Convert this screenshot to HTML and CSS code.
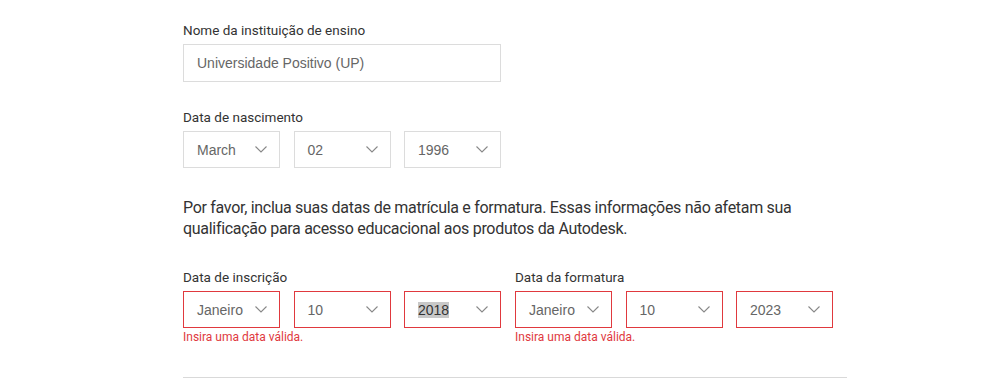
FILE: index.html
```html
<!DOCTYPE html>
<html lang="pt-BR">
<head>
    <meta charset="UTF-8">
    <meta name="viewport" content="width=device-width, initial-scale=1.0">
    <title>Informações educacionais</title>
    <link rel="stylesheet" href="styles.css">
</head>
<body>

    <div class="form">
        <div class="field">
            <label class="label">Nome da instituição de ensino</label>
            <div class="input">Universidade Positivo (UP)</div>
        </div>

        <div class="field">
            <label class="label">Data de nascimento</label>
            <div class="date-row">
                <div class="select"><span>March</span><svg class="chev" viewBox="0 0 12 7"><path d="M0.5 0.5 L6 6 L11.5 0.5"/></svg></div>
                <div class="select"><span>02</span><svg class="chev" viewBox="0 0 12 7"><path d="M0.5 0.5 L6 6 L11.5 0.5"/></svg></div>
                <div class="select"><span>1996</span><svg class="chev" viewBox="0 0 12 7"><path d="M0.5 0.5 L6 6 L11.5 0.5"/></svg></div>
            </div>
        </div>

        <p class="note">Por favor, inclua suas datas de matrícula e formatura. Essas informações não afetam sua qualificação para acesso educacional aos produtos da Autodesk.</p>

        <div class="dates">
            <div class="field">
                <label class="label">Data de inscrição</label>
                <div class="date-row">
                    <div class="select error"><span>Janeiro</span><svg class="chev" viewBox="0 0 12 7"><path d="M0.5 0.5 L6 6 L11.5 0.5"/></svg></div>
                    <div class="select error"><span>10</span><svg class="chev" viewBox="0 0 12 7"><path d="M0.5 0.5 L6 6 L11.5 0.5"/></svg></div>
                    <div class="select error"><span class="selected">2018</span><svg class="chev" viewBox="0 0 12 7"><path d="M0.5 0.5 L6 6 L11.5 0.5"/></svg></div>
                </div>
                <div class="error-msg">Insira uma data válida.</div>
            </div>
            <div class="field">
                <label class="label">Data da formatura</label>
                <div class="date-row">
                    <div class="select error"><span>Janeiro</span><svg class="chev" viewBox="0 0 12 7"><path d="M0.5 0.5 L6 6 L11.5 0.5"/></svg></div>
                    <div class="select error"><span>10</span><svg class="chev" viewBox="0 0 12 7"><path d="M0.5 0.5 L6 6 L11.5 0.5"/></svg></div>
                    <div class="select error"><span>2023</span><svg class="chev" viewBox="0 0 12 7"><path d="M0.5 0.5 L6 6 L11.5 0.5"/></svg></div>
                </div>
                <div class="error-msg">Insira uma data válida.</div>
            </div>
        </div>

        <hr class="divider">
    </div>

</body>
</html>
```

FILE: styles.css
```css
body {
    margin: 0;
    background: #fff;
    font-family: Roboto, "Noto Sans", sans-serif;
    color: #3c3c3c;
}
.form {
    width: 664px;
    padding: 21px 0 0 183px;
}
.field {
    margin-bottom: 26px;
}
.label {
    display: block;
    font-size: 13.5px;
    line-height: 18px;
    color: #333;
    margin-bottom: 5px;
}
.input {
    box-sizing: border-box;
    width: 318px;
    height: 38px;
    border: 1px solid #dcdcdc;
    padding: 0 13px;
    font-family: "Liberation Sans", Arial, sans-serif;
    font-size: 14px;
    line-height: 36px;
    color: #666;
}
.date-row {
    display: flex;
    gap: 13.5px;
}
.select {
    box-sizing: border-box;
    width: 97px;
    height: 37px;
    border: 1px solid #dcdcdc;
    display: flex;
    align-items: center;
    justify-content: space-between;
    padding: 0 12px 0 13px;
    font-family: "Liberation Sans", Arial, sans-serif;
    font-size: 14px;
    color: #666;
}
.select.error {
    border-color: #e0393e;
}
.selected {
    background: #c8c8c8;
    color: #333;
}
.chev {
    width: 12px;
    height: 7px;
    fill: none;
    stroke: #888;
    stroke-width: 1.1;
}
.note {
    margin: 29px 0 29px;
    font-size: 16px;
    letter-spacing: -0.3px;
    line-height: 21px;
    color: #333;
    width: 640px;
}
.dates {
    display: flex;
    gap: 14px;
}
.dates .field {
    margin-bottom: 0;
}
.error-msg {
    font-size: 12px;
    line-height: 14px;
    color: #e0393e;
    margin-top: 2px;
}
.divider {
    border: none;
    border-top: 1px solid #d9d9d9;
    margin: 33px 0 0;
}
```
